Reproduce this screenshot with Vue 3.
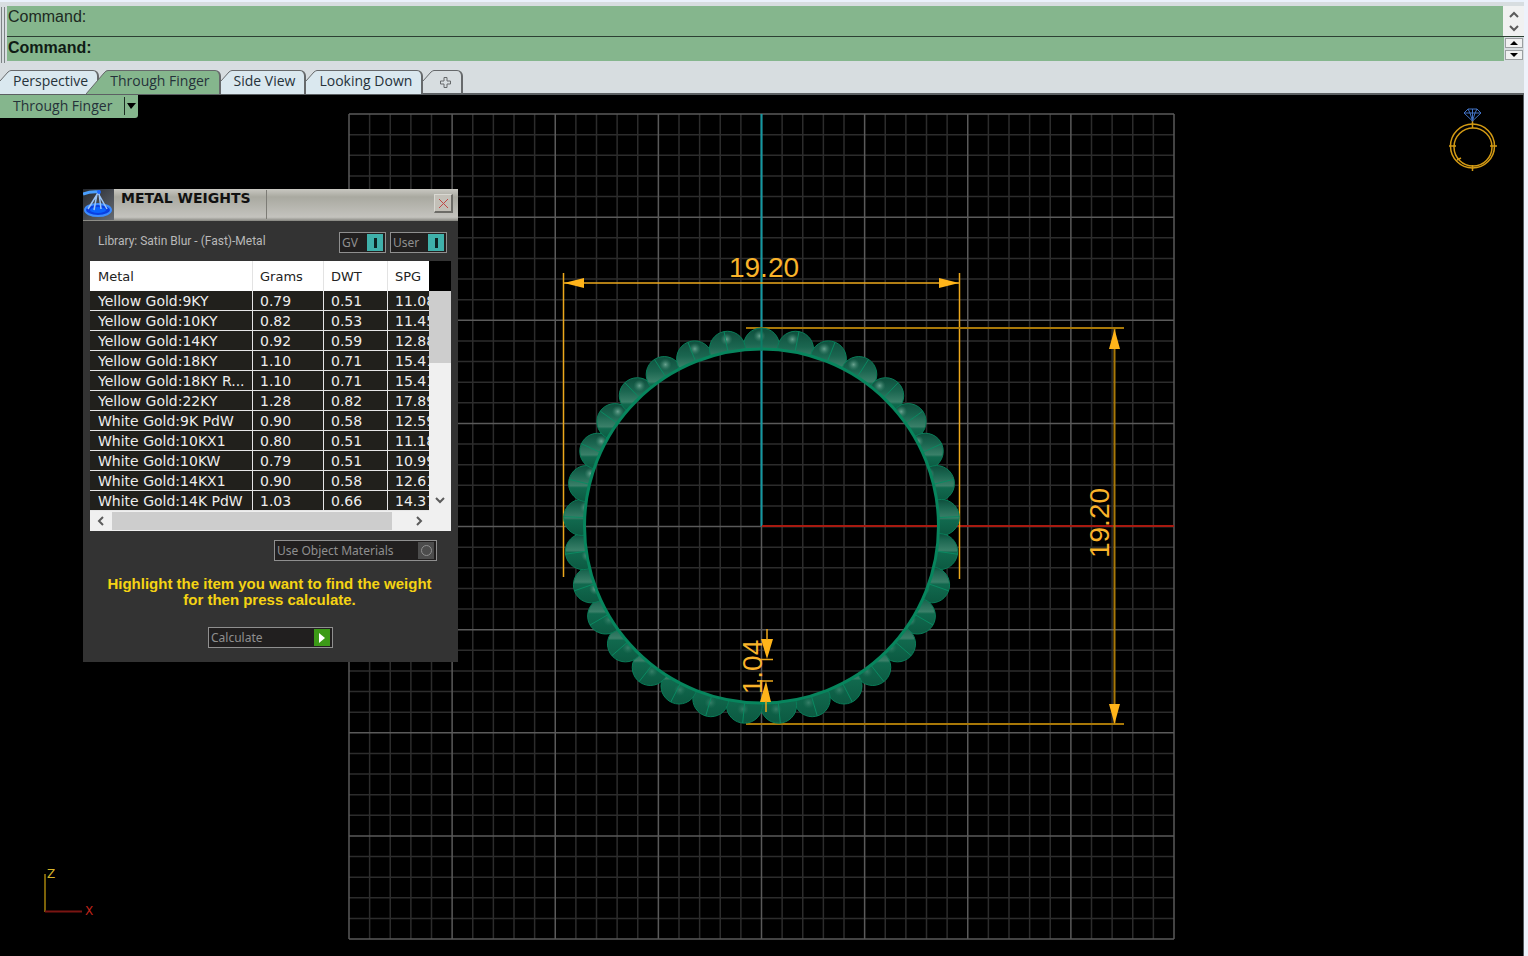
<script setup>
import { ref } from 'vue'

const tabs = ['Perspective', 'Through Finger', 'Side View', 'Looking Down']
const active = ref('Through Finger')
const command = ref('')

const metals = [
  ['Yellow Gold:9KY', '0.79', '0.51', '11.08'],
  ['Yellow Gold:10KY', '0.82', '0.53', '11.45'],
  ['Yellow Gold:14KY', '0.92', '0.59', '12.88'],
  ['Yellow Gold:18KY', '1.10', '0.71', '15.41'],
  ['Yellow Gold:18KY R...', '1.10', '0.71', '15.41'],
  ['Yellow Gold:22KY', '1.28', '0.82', '17.89'],
  ['White Gold:9K PdW', '0.90', '0.58', '12.59'],
  ['White Gold:10KX1', '0.80', '0.51', '11.18'],
  ['White Gold:10KW', '0.79', '0.51', '10.99'],
  ['White Gold:14KX1', '0.90', '0.58', '12.61'],
  ['White Gold:14K PdW', '1.03', '0.66', '14.37']
]

// Construction grid: 40 cells per side, a major line on every fifth one.
const grid = { x: 349, y: 114, size: 825, cells: 40 }
const gridLines = Array.from({ length: grid.cells + 1 }, (_, i) => ({
  at: (i * grid.size) / grid.cells,
  major: i % 5 === 0
})).sort((a, b) => a.major - b.major)

// Ring band: beads evenly spaced around the finger hole.
const center = { x: 761.5, y: 526 }
const inner = 177
const beadCount = 33
const beads = Array.from({ length: beadCount }, (_, i) => {
  const a = (i * 2 * Math.PI) / beadCount
  const ux = Math.sin(a)
  const uy = -Math.cos(a)
  const x = center.x + ux * 180
  const y = center.y + uy * 180
  return {
    id: 'bead' + i,
    x,
    y,
    band: 0.5 - uy * 0.24,
    shine: uy < 0.5 ? 0.8 : 0.35,
    hx: x - ux * 6 - 2,
    hy: y - (uy < 0 ? 10 : -4),
    x1: center.x + ux * inner,
    y1: center.y + uy * inner,
    x2: center.x + ux * 198,
    y2: center.y + uy * 198
  }
})
const holeClip = `M500 250H1020V800H500Z M${center.x - inner} ${center.y} a${inner} ${inner} 0 1 0 ${inner * 2} 0 a${inner} ${inner} 0 1 0 ${-inner * 2} 0Z`
</script>

<template>
  <div class="app">
    <header class="command-area">
      <div class="grip"></div>
      <div class="command-lines">
        <div class="line history-line">
          <output class="history">Command:</output>
          <div class="scroll">
            <button aria-label="Scroll up"><svg width="12" height="8" viewBox="0 0 12 8"><path d="M2 7 6 3 10 7" /></svg></button>
            <button aria-label="Scroll down"><svg width="12" height="8" viewBox="0 0 12 8"><path d="M2 1 6 5 10 1" /></svg></button>
          </div>
        </div>
        <div class="line prompt-line">
          <label class="prompt" for="command">Command:</label>
          <input id="command" v-model="command" class="command-input" type="text" autocomplete="off" />
          <div class="spin">
            <button aria-label="Previous command"><svg width="8" height="4" viewBox="0 0 8 4"><path d="M0 4 4 0 8 4Z" /></svg></button>
            <button aria-label="Next command"><svg width="8" height="4" viewBox="0 0 8 4"><path d="M0 0H8L4 4Z" /></svg></button>
          </div>
        </div>
      </div>
    </header>

    <nav class="tabs">
      <button v-for="t in tabs" :key="t" class="tab" :class="{ active: t === active }" @click="active = t">
        <svg v-if="t === active" class="cap wide" viewBox="0 0 22 24"><path class="fill" d="M0 24 18 3Q20 0 22 0V24Z" /><path class="edge" d="M0 24 18 3Q20 .5 22 .5" /></svg>
        <svg v-else class="cap" viewBox="0 0 11 24"><path class="fill" d="M0 11 8 2Q10 0 11 0V24H0Z" /><path class="edge" d="M0 11 8 2Q10 .5 11 .5" /></svg>
        <span class="tab-body">{{ t }}</span>
      </button>
      <button class="tab add" aria-label="New viewport">
        <svg class="cap" viewBox="0 0 11 24"><path class="edge" d="M0 11 8 2Q10 .5 11 .5" /></svg>
        <span class="tab-body">
          <svg width="11" height="11" viewBox="0 0 11 11"><path class="plus" d="M4 .5H7V4H10.500V7H7V10.500H4V7H.5V4H4Z" /></svg>
        </span>
      </button>
    </nav>

    <main class="viewport">
      <svg class="scene" viewBox="0 95 1523 861" preserveAspectRatio="xMidYMin slice">
        <defs>
          <linearGradient v-for="b in beads" :id="b.id" :key="b.id" x1="0" y1="0" x2="0" y2="1">
            <stop offset="0" stop-color="#0e4e3c" />
            <stop :offset="b.band - 0.3" stop-color="#1b6650" />
            <stop :offset="b.band" stop-color="#3a8069" />
            <stop :offset="b.band + 0.06" stop-color="#11694e" />
            <stop offset="1" stop-color="#0c5941" />
          </linearGradient>
          <radialGradient id="shine">
            <stop offset="0" stop-color="#7fb5a3" />
            <stop offset="1" stop-color="#3f8870" stop-opacity="0" />
          </radialGradient>
          <clipPath id="outside"><path :d="holeClip" clip-rule="evenodd" /></clipPath>
        </defs>

        <g v-for="l in gridLines" :key="l.at" :class="l.major ? 'major' : 'minor'">
          <line :x1="grid.x + l.at" :y1="grid.y" :x2="grid.x + l.at" :y2="grid.y + grid.size" />
          <line :x1="grid.x" :y1="grid.y + l.at" :x2="grid.x + grid.size" :y2="grid.y + l.at" />
        </g>
        <line class="axis-z" x1="761.5" y1="114" x2="761.5" y2="526" />
        <line class="axis-x" x1="762" y1="526" x2="1174" y2="526" />

        <g class="dim">
          <path class="thin" d="M563.5 273V577 M959.5 273V579 M564 283H959" />
          <path class="dull" d="M746 328H1124 M746 724H1124 M1114.500 329V723" />
        </g>

        <g clip-path="url(#outside)">
          <g v-for="b in beads" :key="b.id">
            <circle class="bead" :cx="b.x" :cy="b.y" r="18" :fill="`url(#${b.id})`" />
            <circle :cx="b.hx" :cy="b.hy" r="6" fill="url(#shine)" :opacity="b.shine" />
            <line class="seam" :x1="b.x1" :y1="b.y1" :x2="b.x2" :y2="b.y2" />
          </g>
        </g>
        <circle class="hole" :cx="center.x" :cy="center.y" :r="inner" />
        <line class="axis-over" x1="761.5" y1="328" x2="761.5" y2="351" />

        <g class="arrows">
          <path d="M564 283 584 278V288Z M959 283 939 278V288Z M1114.500 329 1109 349H1120Z M1114.500 724 1109 704H1120Z" />
          <path d="M767 659 761 639H773Z M766 681 760 702H771Z" />
          <path class="thin" d="M767 629V640 M766 701V712 M759 659.500H773 M757 681H773" />
        </g>
        <g class="dim-text">
          <text x="764" y="277" font-size="28">19.20</text>
          <text transform="translate(1109 523) rotate(-90)" font-size="28">19.20</text>
          <text transform="translate(762 667) rotate(-90)" font-size="28">1.04</text>
        </g>

        <g class="compass">
          <path class="cz" d="M45 874V912" />
          <path class="cx" d="M45 911.500H82" />
          <text class="cz-label" x="47" y="878">Z</text>
          <text class="cx-label" x="85" y="915">X</text>
        </g>

        <g class="ring-logo">
          <circle cx="1472.500" cy="146" r="22" />
          <circle cx="1473" cy="147" r="19" />
          <path d="M1449 146H1456M1490 146H1497M1472.500 120V128M1472.500 165V171M1457 160l4-2" />
          <path class="gem" d="M1468 109H1477L1481 113 1472.500 121 1464 113ZM1464 113H1481M1468 109 1470 113 1472.500 121 1475 113 1477 109M1472.500 109V121" />
        </g>
      </svg>

      <div class="view-title">
        <span>Through Finger</span>
        <button aria-label="Viewport menu"><svg width="10" height="6" viewBox="0 0 10 6"><path d="M1 0H10L5 6Z" /></svg></button>
      </div>

      <section class="dialog" role="dialog" aria-labelledby="dialog-title">
        <div class="title-bar">
          <svg class="logo" viewBox="0 0 31 31">
            <defs>
              <linearGradient id="logo-bg" x1="0" y1="0" x2="1" y2="1"><stop offset="0" stop-color="#25282e" /><stop offset="1" stop-color="#666b72" /></linearGradient>
            </defs>
            <rect width="31" height="31" fill="url(#logo-bg)" />
            <path d="M0 5Q8 2 17 3" stroke="#4aa0ff" stroke-width="3" fill="none" />
            <ellipse cx="15" cy="21" rx="13" ry="6" fill="#0a3fe0" stroke="#3c8cff" stroke-width="2" />
            <ellipse cx="15" cy="21" rx="8" ry="3" fill="#0a64ff" />
            <path d="M15 4 5 20M15 4 24 20M16 4 18 20M14 5 11 21" stroke="#9cc4f5" stroke-width="1.500" fill="none" />
            <circle cx="16" cy="3" r="2" fill="#1b66ff" />
          </svg>
          <h1 id="dialog-title">METAL WEIGHTS</h1>
          <button class="close" aria-label="Close"><svg width="11" height="11" viewBox="0 0 11 11"><path d="M1 1 10 10M10 1 1 10" /></svg></button>
        </div>

        <div class="dialog-body">
          <div class="library-row">
            <span class="library">Library: Satin Blur - (Fast)-Metal</span>
            <button class="toggle gv" aria-pressed="true"><span>GV</span><i></i></button>
            <button class="toggle" aria-pressed="true"><span>User</span><i></i></button>
          </div>

          <div class="list">
            <div class="list-main">
              <div class="table-clip">
                <table>
                  <colgroup><col class="c-metal" /><col class="c-grams" /><col class="c-dwt" /><col class="c-spg" /></colgroup>
                  <thead>
                    <tr><th>Metal</th><th>Grams</th><th>DWT</th><th>SPG</th></tr>
                  </thead>
                  <tbody>
                    <tr v-for="m in metals" :key="m[0]"><td v-for="(v, i) in m" :key="i">{{ v }}</td></tr>
                  </tbody>
                </table>
              </div>
              <div class="vscroll">
                <div class="vthumb"></div>
                <button aria-label="Scroll list down"><svg width="12" height="8" viewBox="0 0 12 8"><path d="M2 1 6 5 10 1" /></svg></button>
              </div>
            </div>
            <div class="hscroll">
              <button aria-label="Scroll left"><svg width="8" height="12" viewBox="0 0 8 12"><path d="M6 2 2 6 6 10" /></svg></button>
              <div class="hthumb"></div>
              <button class="right" aria-label="Scroll right"><svg width="8" height="12" viewBox="0 0 8 12"><path d="M2 2 6 6 2 10" /></svg></button>
            </div>
          </div>

          <button class="option" aria-pressed="false"><span>Use Object Materials</span><i></i></button>
          <p class="hint">Highlight the item you want to find the weight<br />for then press calculate.</p>
          <button class="calculate">
            <span>Calculate</span>
            <i><svg width="6" height="10" viewBox="0 0 6 10"><path d="M0 0 6 5 0 10Z" /></svg></i>
          </button>
        </div>
      </section>
    </main>
  </div>
</template>

<style>
body {
  background: #eef2fb;
}
</style>

<style scoped>
* {
  box-sizing: border-box;
}
button {
  margin: 0;
  padding: 0;
  border: 0;
  background: none;
  font: inherit;
  color: inherit;
}
svg {
  display: block;
}
.app {
  min-height: 100vh;
  display: flex;
  flex-direction: column;
  margin-right: 4px;
  border-top: 2px solid #eaf1fb;
  background: #d7dde0;
  font-family: "Open Sans", "Noto Sans", sans-serif;
  overflow: hidden;
}
.command-area {
  display: flex;
  padding-top: 4px;
}
.grip {
  width: 4px;
  margin: 1px 2px 0 1px;
  height: 56px;
  border-left: 1px solid #7d8385;
  border-right: 1px solid #7d8385;
}
.command-lines {
  flex: 1;
}
.line {
  display: flex;
  background: #85b68d;
  color: #1d2a22;
  font-family: "Liberation Sans", Arial, sans-serif;
  font-size: 16px;
}
.history-line {
  height: 31px;
  border-bottom: 1px solid #2c3f33;
}
.history {
  flex: 1;
  line-height: 21px;
  padding-left: 1px;
}
.prompt-line {
  height: 24px;
  line-height: 22px;
}
.prompt {
  padding-left: 1px;
  font-weight: bold;
  color: #101c15;
}
.command-input {
  flex: 1;
  min-width: 0;
  border: 0;
  outline: 0;
  background: transparent;
  font: inherit;
}
.scroll {
  width: 21px;
  display: flex;
  flex-direction: column;
  justify-content: space-around;
  align-items: center;
  background: #f0f1f1;
}
.scroll path,
.vscroll path,
.hscroll path {
  fill: none;
  stroke: #5b5b5b;
  stroke-width: 2;
}
.spin {
  width: 20px;
  display: flex;
  flex-direction: column;
  gap: 2px;
  padding: 1px;
  background: #d7dde0;
}
.spin button {
  flex: 1;
  display: grid;
  place-items: center;
  border: 1px solid #9b9fa1;
  background: #f0f1f1;
}
.tabs {
  display: flex;
  height: 32px;
  padding-top: 7px;
  border-bottom: 2px solid #5c6063;
  font-size: 14px;
  color: #26323a;
}
.tab {
  display: flex;
  height: 23px;
}
.cap {
  width: 11px;
  height: 24px;
}
.cap.wide {
  width: 22px;
}
.cap .fill {
  fill: #dae8ef;
}
.edge {
  fill: none;
  stroke: #66696b;
  stroke-width: 1;
}
.tab-body {
  padding: 0 9px 0 2px;
  height: 24px;
  line-height: 20px;
  background: #dae8ef;
  border-top: 1px solid #66696b;
  border-right: 2px solid #66696b;
  border-radius: 0 6px 0 0;
}
.active {
  position: relative;
  z-index: 1;
  margin-left: -13px;
}
.active .tab-body {
  background: #85b68d;
}
.active .fill {
  fill: #85b68d;
}
.add .tab-body {
  background: none;
  display: flex;
  align-items: center;
  padding: 0 10px 0 6px;
}
.plus {
  fill: none;
  stroke: #66696b;
}
.viewport {
  position: relative;
  flex: 1;
  background: #000;
  border-right: 1px solid #555b60;
  min-height: 600px;
}
.scene {
  position: absolute;
  inset: 0;
  width: 100%;
  height: 100%;
}
.minor line {
  stroke: #2c2c2c;
  stroke-width: 1.500;
}
.major line {
  stroke: #5a5a5a;
  stroke-width: 1.500;
}
.axis-z {
  stroke: #1398a2;
  stroke-width: 2;
}
.axis-x {
  stroke: #a81a10;
  stroke-width: 2;
}
.axis-over {
  stroke: #0b7f68;
  stroke-width: 2;
}
.thin {
  fill: none;
  stroke: #eca81c;
  stroke-width: 1.500;
}
.dull {
  fill: none;
  stroke: #a87808;
  stroke-width: 2;
}
.arrows {
  fill: #ffb41a;
}
.dim-text {
  font-family: "Liberation Sans", Arial, sans-serif;
  fill: #f9b32a;
  text-anchor: middle;
}
.bead {
  stroke: #0a7d59;
  stroke-width: 1;
}
.seam {
  stroke: #0a8a62;
  stroke-width: 1;
}
.hole {
  fill: none;
  stroke: #07855d;
  stroke-width: 3;
}
.compass path {
  stroke-width: 2;
}
.cz {
  stroke: #7c6209;
}
.cx {
  stroke: #7a1512;
}
.compass text {
  font: 12px "DejaVu Sans", Verdana, sans-serif;
}
.cz-label {
  fill: #d6b52c;
}
.cx-label {
  fill: #c3241b;
}
.ring-logo {
  fill: none;
  stroke: #d39a14;
  stroke-width: 1.500;
}
.gem {
  stroke: #4273c4;
  stroke-width: 1;
}
.view-title {
  position: absolute;
  top: 0;
  left: 0;
  display: flex;
  height: 23px;
  padding: 2px 2px 3px 13px;
  background: #85b68d;
  border-radius: 0 0 3px 0;
  font-size: 14px;
  line-height: 18px;
  color: #26323a;
}
.view-title button {
  margin-left: 12px;
  padding-left: 1px;
  border-left: 1px solid #1c2b22;
  color: #000;
}
.dialog {
  position: absolute;
  left: 83px;
  top: 94px;
  width: 375px;
  background: #333333;
  font-family: "DejaVu Sans", Verdana, sans-serif;
}
.title-bar {
  display: flex;
  height: 32px;
  background: linear-gradient(#c9c8c2, #a9a9a0 25%, #c4c3be 88%, #85857f);
}
.logo {
  width: 31px;
  height: 31px;
}
h1 {
  margin: 1px 0 2px;
  width: 153px;
  padding-left: 7px;
  font-size: 14px;
  line-height: 16px;
  font-weight: bold;
  white-space: nowrap;
  color: #111;
  border-right: 1px solid #7d7c76;
}
.close {
  width: 19px;
  height: 19px;
  margin: 5px 5px 0 auto;
  display: grid;
  place-items: center;
  background: #c3c0b8;
  border: 1px solid #d9d8d2;
  border-right: 2px solid #6d6c67;
  border-bottom: 2px solid #6d6c67;
}
.close path {
  stroke: #c04848;
  stroke-width: 1;
}
.dialog-body {
  padding: 11px 7px 14px;
  display: flex;
  flex-direction: column;
}
.library-row {
  display: flex;
  gap: 4px;
  padding: 0 4px 0 8px;
  margin-bottom: 8px;
}
.library {
  flex: 1;
  font: 12px/18px Roboto, Arial, sans-serif;
  color: #b9b9b9;
}
.toggle,
.option,
.calculate {
  display: flex;
  align-items: center;
  justify-content: space-between;
  height: 21px;
  padding: 0 2px;
  border: 1px solid #8f8f8f;
  background: #211f1f;
  color: #8f8f8f;
  font: 12px/20px "Noto Sans", sans-serif;
}
.toggle {
  width: 57px;
}
.toggle.gv {
  width: 47px;
}
.toggle i {
  width: 16px;
  height: 17px;
  display: grid;
  place-items: center;
  background: #3fb0aa;
}
.toggle i::before {
  content: "";
  width: 3px;
  height: 10px;
  background: #0d2222;
}
.list {
  width: 361px;
}
.list-main {
  display: flex;
  height: 250px;
}
.table-clip {
  width: 339px;
  overflow: hidden;
}
table {
  width: 382px;
  table-layout: fixed;
  border-collapse: separate;
  border-spacing: 0;
  font-size: 14px;
  color: #eee;
}
.c-metal {
  width: 163px;
}
.c-grams {
  width: 71px;
}
.c-dwt {
  width: 64px;
}
.c-spg {
  width: 84px;
}
th {
  height: 30px;
  padding: 0 0 0 8px;
  background: #fff;
  color: #222;
  font-size: 13px;
  font-weight: normal;
  text-align: left;
  border-right: 1px solid #e3e3e3;
}
th + th,
td + td {
  padding-left: 7px;
}
td {
  height: 20px;
  padding: 2px 5px 0 8px;
  line-height: 17px;
  background: #21201c;
  border-right: 1px solid #e6e6e6;
  border-bottom: 1px solid #e6e6e6;
  overflow: hidden;
  white-space: nowrap;
}
.vscroll {
  width: 22px;
  margin-top: 30px;
  display: flex;
  flex-direction: column;
  justify-content: space-between;
  align-items: center;
  background: #f0f0f0;
  box-shadow: 0 -30px #000;
}
.vthumb {
  width: 100%;
  height: 72px;
  background: #cdcdcd;
}
.vscroll button {
  padding-bottom: 6px;
}
.hscroll {
  display: flex;
  height: 20px;
  padding: 1px 0;
  background: #f0f0f0;
}
.hscroll button {
  width: 22px;
  display: grid;
  place-items: center;
}
.hscroll .right {
  margin-left: 16px;
}
.hthumb {
  width: 280px;
  background: #cdcdcd;
}
.option {
  width: 163px;
  align-self: flex-end;
  margin: 9px 14px 0 0;
}
.option i {
  width: 16px;
  height: 17px;
  display: grid;
  place-items: center;
  background: #4c4c4c;
}
.option i::before {
  content: "";
  width: 9px;
  height: 9px;
  border: 1px solid #8f8f8f;
  border-radius: 50%;
}
.hint {
  margin: 15px 0 19px;
  padding-right: 2px;
  text-align: center;
  font: bold 15px/16px "Liberation Sans", Arial, sans-serif;
  color: #f5d313;
}
.calculate {
  width: 125px;
  align-self: center;
}
.calculate i {
  width: 16px;
  height: 17px;
  display: grid;
  place-items: center;
  background: #3c9a17;
}
.calculate path {
  fill: #fff;
}
</style>
